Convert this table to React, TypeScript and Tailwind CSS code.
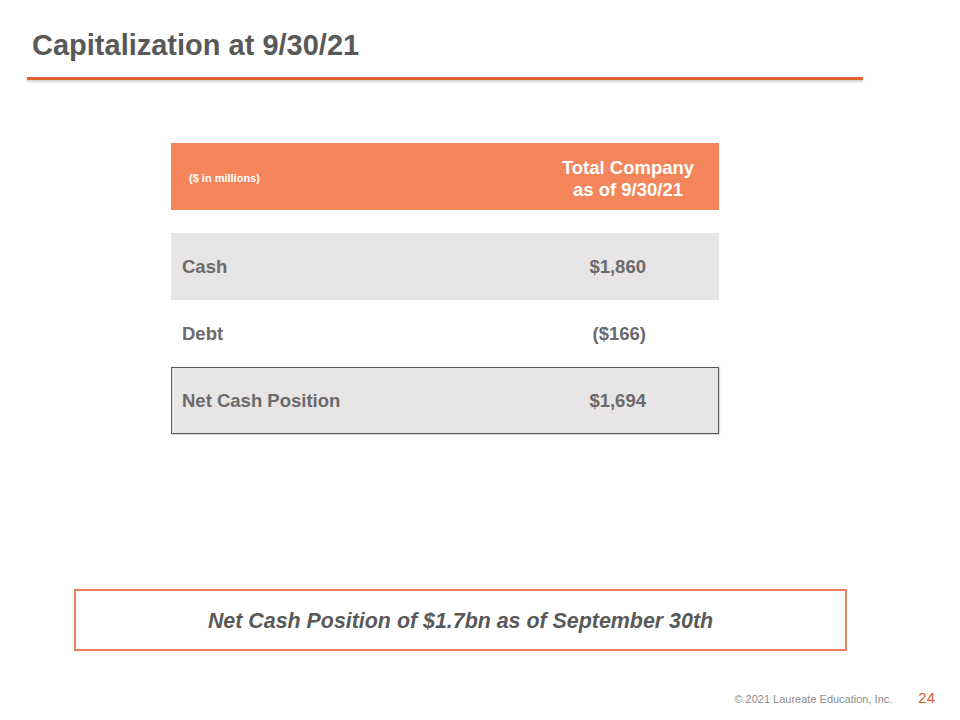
import React from "react";

const rows = [
  { label: "Cash", value: "$1,860", shaded: true, boxed: false },
  { label: "Debt", value: "($166)", shaded: false, boxed: false },
  { label: "Net Cash Position", value: "$1,694", shaded: true, boxed: true },
];

export default function App() {
  return (
    <div className="relative flex h-[720px] w-[960px] flex-col bg-white font-['Liberation_Sans',Arial,sans-serif]">
      {/* title */}
      <div className="pl-[32px] pt-[28px]">
        <h1 className="text-[29px] font-bold leading-[34px] text-[#595959]">Capitalization at 9/30/21</h1>
      </div>
      <div className="ml-[27px] mt-[15px] h-[3px] w-[836px] bg-[#e0622f] shadow-[0_2px_2px_rgba(0,0,0,0.18)]" />

      {/* table */}
      <div className="ml-[171px] mt-[63px] w-[548px]">
        <div className="flex h-[67px] items-center bg-[#f5855b] text-white">
          <div className="flex-1 pl-[18px] pt-[3px] text-[11px] font-bold">($ in millions)</div>
          <div className="w-[182px] pt-[4px] text-center text-[18.5px] font-bold leading-[22px]">
            Total Company
            <br />
            as of 9/30/21
          </div>
        </div>
        <div className="mt-[23px]">
          {rows.map((r) => (
            <div
              key={r.label}
              className={`flex h-[67px] items-center pt-[1px] text-[18.5px] font-bold text-[#6b6b6b] ${r.shaded ? "bg-[#e7e5e6]" : "bg-white"} ${r.boxed ? "border border-[#595959] shadow-[1px_1px_1px_rgba(0,0,0,0.15)]" : ""}`}
            >
              <div className={`flex-1 ${r.boxed ? "pl-[10px]" : "pl-[11px]"}`}>{r.label}</div>
              <div className={`text-right ${r.boxed ? "pr-[72px]" : "pr-[73px]"}`}>{r.value}</div>
            </div>
          ))}
        </div>
      </div>

      {/* takeaway */}
      <div className="ml-[74px] mt-[155px] flex h-[62px] w-[773px] items-center justify-center border-2 border-[#ec8160]">
        <span className="pt-[2px] text-[21.4px] font-bold italic text-[#595959]">Net Cash Position of $1.7bn as of September 30th</span>
      </div>

      {/* footer */}
      <div className="mt-auto flex items-end justify-end gap-[26px] pb-[13px] pr-[25px]">
        <span className="text-[11px] leading-[16px] text-[#8c8c8c]">© 2021 Laureate Education, Inc.</span>
        <span className="text-[15px] leading-[18px] text-[#d4572a]">24</span>
      </div>
    </div>
  );
}
